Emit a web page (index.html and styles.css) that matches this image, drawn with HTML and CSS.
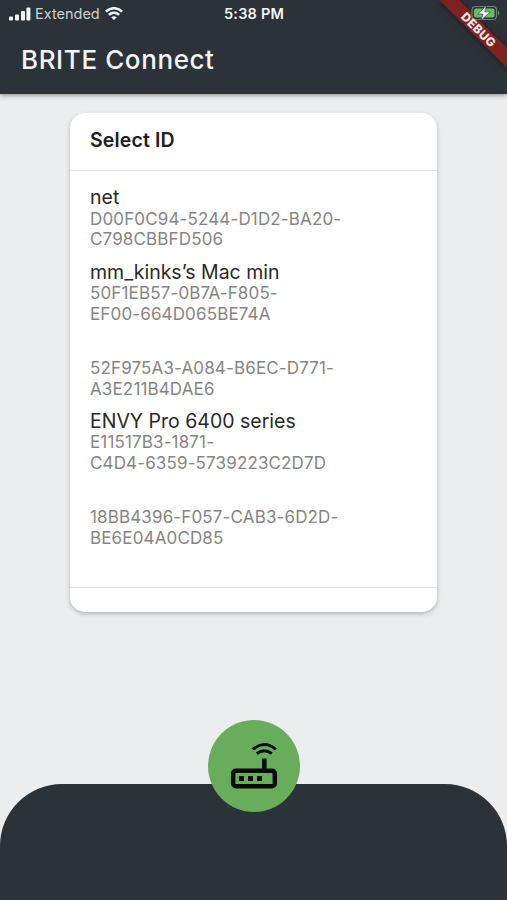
FILE: index.html
```html
<!DOCTYPE html>
<html lang="en">
<head>
<meta charset="utf-8">
<title>BRITE Connect</title>
<link rel="stylesheet" href="styles.css">
</head>
<body>
<div class="app">
  <header class="top">
    <div class="status">
      <div class="carrier">
        <svg width="22" height="14" viewBox="0 0 22 14" fill="#f3f6f7"><rect x="0" y="9.5" width="4" height="4" rx="1"/><rect x="6" y="7.5" width="4" height="6" rx="1"/><rect x="12" y="4" width="4" height="9.5" rx="1"/><rect x="17.4" y="0.5" width="4" height="13" rx="1"/></svg>
        <span class="carrier-name">Extended</span>
        <svg width="18" height="14" viewBox="0 0 18 14" fill="none" stroke="#f3f6f7" stroke-width="2.6"><path d="M0.9 4.6C5.4 0.1 12.6 0.1 17.1 4.6"/><path d="M3.9 7.9C6.8 5.1 11.2 5.1 14.1 7.9"/><path d="M6.2 10.2Q9 8.2 11.8 10.2L9 13.1Z" fill="#f3f6f7" stroke="none"/></svg>
      </div>
      <span class="clock">5:38 PM</span>
    </div>
    <h1 class="title">BRITE Connect</h1>
  </header>
  <main class="content">
    <section class="card">
      <h2 class="card-title">Select ID</h2>
      <ul class="devices">
        <li><p class="name">net</p><p class="uuid">D00F0C94-5244-D1D2-BA20-<br>C798CBBFD506</p></li>
        <li><p class="name">mm_kinks’s Mac min</p><p class="uuid">50F1EB57-0B7A-F805-<br>EF00-664D065BE74A</p></li>
        <li><p class="name"></p><p class="uuid">52F975A3-A084-B6EC-D771-<br>A3E211B4DAE6</p></li>
        <li><p class="name">ENVY Pro 6400 series</p><p class="uuid">E11517B3-1871-<br>C4D4-6359-5739223C2D7D</p></li>
        <li><p class="name"></p><p class="uuid">18BB4396-F057-CAB3-6D2D-<br>BE6E04A0CD85</p></li>
      </ul>
      <div class="card-foot"></div>
    </section>
  </main>
  <footer class="bottom">
    <div class="scan">
      <svg width="92" height="92" viewBox="0 0 92 92" fill="none" stroke="#050a05">
        <rect x="25.2" y="50.7" width="41.6" height="15.6" rx="2.8" stroke-width="4.4"/>
        <path d="M56.3 38.5V50" stroke-width="4.6"/>
        <path d="M44.8 29.4Q56.3 19.6 67.8 29.4M48.8 33.7Q56.3 27.6 63.8 33.7" stroke-width="2.9"/>
        <path d="M31 58.5h5M40 58.5h5M49 58.5h5" stroke-width="5"/>
      </svg>
    </div>
  </footer>
  <svg class="corner" width="72" height="72" viewBox="0 0 72 72">
    <path class="ribbon" d="M4 0H24L72 48V68Z"/>
    <g transform="translate(37 1)">
      <rect x="0" y="5.5" width="24.5" height="13" rx="3.5" fill="#2b3238" stroke="#718078" stroke-width="1.2"/>
      <rect x="2" y="7.5" width="20.5" height="9" rx="2" fill="#66bd69"/>
      <path d="M26 9.5q3 2.5 0 5z" fill="#718078"/>
      <path d="M14.3 4.5L6 13h5l-2 6.5L18.2 10.8h-5.4z" fill="#fff" stroke="#2b3238" stroke-width=".6"/>
    </g>
    <text class="debug" transform="translate(43.4 29.8) rotate(45)" x="0" y="4.2" text-anchor="middle" textLength="43">DEBUG</text>
  </svg>
</div>
</body>
</html>
```
FILE: styles.css
```css
* { box-sizing: border-box; margin: 0; padding: 0; }
body { font-family: Inter, "Liberation Sans", sans-serif; background: #ebedef; }
.app { position: relative; width: 507px; height: 900px; display: flex; flex-direction: column; overflow: hidden; }
.top { height: 94px; background: #2b3238; color: #f0f5f7; box-shadow: 0 1px 5px rgba(0,0,0,.45); }
.status { height: 27px; display: grid; grid-template-columns: 1fr auto 1fr; align-items: center; padding: 0 0 0 9px; }
.carrier { display: flex; align-items: center; gap: 4px; }
.carrier-name { font-size: 14.5px; width: 66px; color: #cbd1d5; white-space: nowrap; }
.clock { font-size: 14.5px; font-weight: 600; letter-spacing: .2px; margin-right: 8px; }
.title { font-size: 26px; line-height: 32px; font-weight: 500; letter-spacing: .6px; padding: 17px 0 0 21px; white-space: nowrap; }
.content { flex: 1; padding: 19px 70px 0; }
.card { height: 499px; display: flex; flex-direction: column; background: #fff; border-radius: 15px; box-shadow: 0 2px 4px rgba(0,0,0,.24); }
.card-title { height: 58px; padding: 14px 20px; font-size: 19.5px; line-height: 26px; font-weight: 600; letter-spacing: .15px; color: #202020; border-bottom: 1px solid #e3e4e5; }
.devices { flex: 1; list-style: none; padding: 15px 20px 0; }
.devices li { height: 74.6px; white-space: nowrap; }
.name { height: 22.6px; font-size: 19.5px; line-height: 23px; color: #292929; }
.uuid { font-size: 17px; line-height: 20.8px; letter-spacing: .14px; color: #858585; }
.card-foot { height: 25px; border-top: 1px solid #e6e6e6; }
.bottom { display: flex; justify-content: center; height: 116px; background: #2b3238; border-radius: 62px 62px 0 0; }
.scan { width: 92px; height: 92px; margin-top: -64px; background: #67ad5b; border-radius: 50%; }
.scan svg { display: block; }
.corner { position: absolute; top: 0; right: 0; }
.ribbon { fill: #80211f; filter: drop-shadow(0 1px 3px rgba(0,0,0,.5)); }
.debug { fill: #f5e9e9; font: 800 12px Inter, "Liberation Sans", sans-serif; }
```
